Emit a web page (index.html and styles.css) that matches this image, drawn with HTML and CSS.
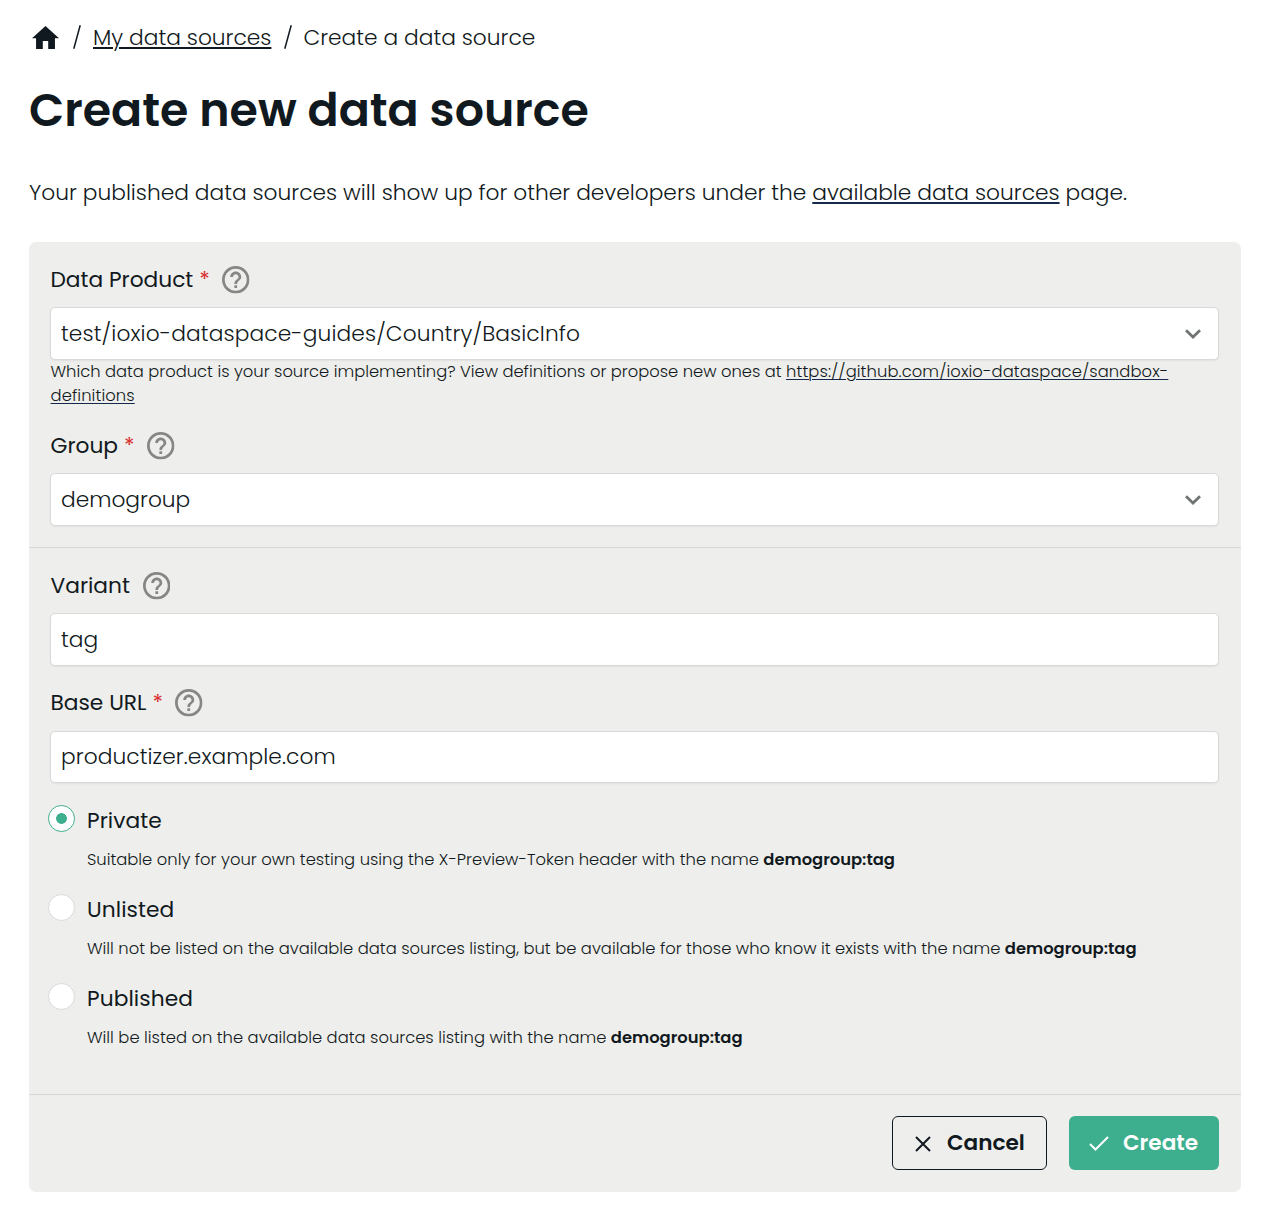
FILE: index.html
```html
<!DOCTYPE html>
<html lang="en">
<head>
<meta charset="utf-8">
<title>Create new data source</title>
<link rel="stylesheet" href="styles.css">
</head>
<body>
<svg class="defs" aria-hidden="true">
  <symbol id="help" viewBox="2 2 20 20"><path fill="#868686" d="M11 18h2v-2h-2v2zm1-16C6.48 2 2 6.48 2 12s4.48 10 10 10 10-4.48 10-10S17.52 2 12 2zm0 18c-4.41 0-8-3.59-8-8s3.59-8 8-8 8 3.59 8 8-3.59 8-8 8zm0-14c-2.21 0-4 1.79-4 4h2c0-1.1.9-2 2-2s2 .9 2 2c0 2-3 1.75-3 5h2c0-2.25 3-2.5 3-5 0-2.21-1.79-4-4-4z"/></symbol>
  <symbol id="chevron" viewBox="0 0 16 10"><path fill="none" stroke="#6f7372" stroke-width="2.7" d="M1 1.2 8 8l7-6.800"/></symbol>
</svg>
<main class="page">
  <nav class="crumbs">
    <svg class="home" viewBox="2 3 20 17"><path fill="#111920" d="M10 20v-6h4v6h5v-8h3L12 3 2 12h3v8z"/></svg>
    <svg class="slash" viewBox="0 0 8 24"><path stroke="#111920" stroke-width="1.5" d="M7.2.3.8 23.7"/></svg>
    <a class="crumb-link" href="#">My data sources</a>
    <svg class="slash" viewBox="0 0 8 24"><path stroke="#111920" stroke-width="1.5" d="M7.2.3.8 23.7"/></svg>
    <span class="crumb-current">Create a data source</span>
  </nav>
  <h1>Create new data source</h1>
  <p class="intro">Your published data sources will show up for other developers under the <a href="#">available data sources</a> page.</p>

  <form class="panel">
    <section class="section">
      <div class="field">
        <div class="label"><span>Data Product</span><span class="req">*</span><svg class="help"><use href="#help"/></svg></div>
        <div class="control"><span class="path">test/ioxio-dataspace-guides/Country/BasicInfo</span><svg class="chevron"><use href="#chevron"/></svg></div>
        <div class="hint">Which data product is your source implementing? View definitions or propose new ones at <a href="#">https://github.com/ioxio-dataspace/sandbox-<br>definitions</a></div>
      </div>
      <div class="field">
        <div class="label"><span>Group</span><span class="req">*</span><svg class="help"><use href="#help"/></svg></div>
        <div class="control"><span>demogroup</span><svg class="chevron"><use href="#chevron"/></svg></div>
      </div>
    </section>
    <section class="section details">
      <div class="field">
        <div class="label"><span>Variant</span><svg class="help"><use href="#help"/></svg></div>
        <div class="control">tag</div>
      </div>
      <div class="field base">
        <div class="label"><span>Base URL</span><span class="req">*</span><svg class="help"><use href="#help"/></svg></div>
        <div class="control short">productizer.example.com</div>
      </div>
      <div class="options">
        <div class="option">
          <span class="radio checked"></span>
          <div class="option-name">Private</div>
          <div class="option-text">Suitable only for your own testing using the X-Preview-Token header with the name <b>demogroup:tag</b></div>
        </div>
        <div class="option">
          <span class="radio"></span>
          <div class="option-name">Unlisted</div>
          <div class="option-text">Will not be listed on the available data sources listing, but be available for those who know it exists with the name <b>demogroup:tag</b></div>
        </div>
        <div class="option">
          <span class="radio"></span>
          <div class="option-name">Published</div>
          <div class="option-text">Will be listed on the available data sources listing with the name <b>demogroup:tag</b></div>
        </div>
      </div>
    </section>
    <footer class="actions">
      <button type="button" class="btn cancel"><svg class="cross" viewBox="0 0 16 16"><path fill="none" stroke="#111920" stroke-width="2" d="m1 1 14 14M15 1 1 15"/></svg>Cancel</button>
      <button type="button" class="btn create"><svg class="check" viewBox="0 0 20 15"><path fill="none" stroke="#fff" stroke-width="2" d="m1 8 5.5 5.5L19 1"/></svg>Create</button>
    </footer>
  </form>
</main>
</body>
</html>
```
FILE: styles.css
```css
* { box-sizing: border-box; }
body {
  margin: 0;
  background: #fff;
  color: #111920;
  font-family: Poppins, Inter, sans-serif;
  font-size: 21.74px;
  font-weight: 300;
}
a { color: inherit; text-decoration: underline; text-decoration-thickness: 2px; text-underline-offset: 2px; }
svg { display: block; flex: none; }
.defs { display: none; }
.page { padding: 22px 25px 19px 29px; }

.crumbs { display: flex; align-items: center; height: 31px; white-space: nowrap; }
.home { width: 27px; height: 23px; margin-left: 3px; }
.slash { width: 8px; height: 24px; margin: -2px 0 0 14px; }
.crumb-link { margin-left: 12px; }
.crumb-link + .slash { margin-left: 12.5px; }
.crumb-current { margin-left: 11.5px; }

h1 { margin: 27px 0 0; font-size: 45.9px; line-height: 61px; font-weight: 600; }

.intro { margin: 36px 0 33px; line-height: 32px; white-space: nowrap; }
.intro a { text-decoration-color: #152a4a; }

.panel { background: #eeeeec; border-radius: 7px; }
.section { padding: 24px 22px 21px 21px; border-bottom: 1px solid #d6d8d8; }
.field + .field { margin-top: 24px; }
.details .base { margin-top: 23px; }
.label { display: flex; align-items: center; height: 28px; margin-bottom: 13px; padding-left: 0.5px; line-height: 28px; font-weight: 400; white-space: nowrap; }
.base .label { margin-bottom: 14px; }
.label span { margin-top: -1px; }
.label .req { margin-left: 6px; width: 10px; color: #d9302f; }
.help { width: 27.5px; height: 27.5px; margin-left: 13px; }
.control {
  display: flex; align-items: center; justify-content: space-between;
  height: 53px; padding: 0 17px 0 10px;
  background: #fff; border: 1px solid #d8dada; border-radius: 5px;
  box-shadow: 0 1px 2px rgba(0, 0, 0, 0.06);
  white-space: nowrap;
}
.control.short { height: 52px; padding-bottom: 1px; letter-spacing: 0.08px; }
.path { letter-spacing: 0.125px; }
.chevron { width: 16px; height: 10px; }
.hint { padding-left: 0.5px; font-size: 16.33px; line-height: 24px; white-space: nowrap; }
.hint a { letter-spacing: 0.11px; text-decoration-thickness: 1px; text-decoration-color: #152a4a; }

.options { margin-top: 22px; padding-bottom: 1px; }
.option { display: grid; grid-template-columns: 27px 1fr; column-gap: 12px; grid-template-rows: 32px 36px; row-gap: 2px; height: 89px; margin-left: -2px; white-space: nowrap; }
.radio { width: 27px; height: 27px; border: 1px solid #d8dada; border-radius: 50%; background: #fff; }
.radio.checked { border: 1.5px solid #3daf8e; background: radial-gradient(circle, #3daf8e 5px, #fff 5.7px); }
.option-name { line-height: 32px; font-weight: 400; letter-spacing: 0.08px; }
.option-text { grid-column: 2; font-size: 16.36px; line-height: 42px; }
.option-text b { font-weight: 600; }

.actions { display: flex; justify-content: flex-end; gap: 22px; padding: 21px 22px 22px; }
.btn {
  display: flex; align-items: center; height: 54px; padding: 0 0 2px;
  border: 0; border-radius: 6px;
  font: inherit; font-size: 21.6px; font-weight: 600;
  white-space: nowrap;
}
.cancel { width: 155px; border: 1px solid #111920; background: transparent; color: #111920; }
.create { width: 150px; background: #3daf8e; color: #fff; }
.cross { width: 16px; height: 16px; margin: 3px 16.5px 0 21.5px; }
.check { width: 20px; height: 15px; margin: 3px 14px 0 20px; }
```
